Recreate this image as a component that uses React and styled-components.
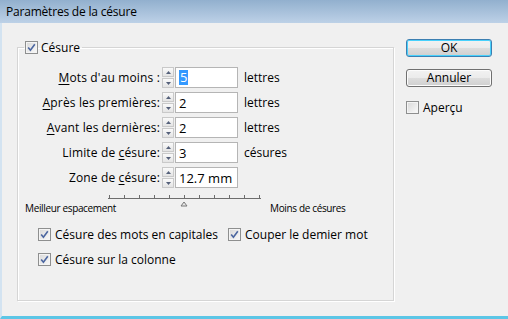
import React from 'react';
import styled, { createGlobalStyle } from 'styled-components';

const GlobalStyle = createGlobalStyle`
  html, body { margin: 0; padding: 0; background: #f0f0f0; }
  body { font-family: "Open Sans", "Noto Sans", sans-serif; font-size: 12px; }
`;

const Window = styled.div`
  width: 508px;
  height: 319px;
  box-sizing: border-box;
  display: flex;
  flex-direction: column;
  background: #f0f0f0;
  border-left: 2px solid #d3e3f1;
  border-bottom: 3px solid #5cc6e6;
  color: #000;
`;

const TitleBar = styled.div`
  height: 23px;
  margin-left: -2px;
  padding-left: 6px;
  display: flex;
  align-items: center;
  background: linear-gradient(#92b0ce, #bdd1e7);
  font-size: 12px;
  letter-spacing: -0.2px;
  flex-shrink: 0;
`;

const Body = styled.div`
  flex: 1;
  display: flex;
  padding: 16px 0 15px 15px;
  gap: 12px;
`;

const Group = styled.fieldset`
  width: 377px;
  box-sizing: border-box;
  margin: 0;
  padding: 12px 0 0 0;
  border: 1px solid #d5d5d5;
  box-shadow: inset 1px 1px 0 #fff, 1px 1px 0 #fff;
`;

const Legend = styled.legend`
  margin-left: 6px;
  padding: 0 2px 0 1px;
  height: 16px;
  display: flex;
  align-items: center;
  gap: 3px;
`;

const Box = styled.span`
  width: 13px;
  height: 13px;
  box-sizing: border-box;
  border: 1px solid #8e8f8f;
  background: linear-gradient(135deg, #d8d8d8, #fafafa);
  box-shadow: inset 0 0 0 1px #f4f4f4;
  display: inline-flex;
  align-items: center;
  justify-content: center;
  flex-shrink: 0;
`;

const Check = ({ checked }) => (
  <Box>
    {checked && (
      <svg width="9" height="9" viewBox="0 0 9 9">
        <path d="M1.2 4.6 L3.4 7.2 L7.8 1.2" fill="none" stroke="#4b66a0" strokeWidth="1.6" />
      </svg>
    )}
  </Box>
);

const Fields = styled.div`
  display: grid;
  grid-template-columns: 144px 12px 64px auto;
  row-gap: 4px;
  align-items: center;
`;

const Label = styled.span`
  text-align: right;
  padding-right: 2px;
  white-space: nowrap;
  letter-spacing: 0.15px;
  u { text-decoration-thickness: 1px; text-underline-offset: 2px; }
`;

const Spinner = styled.div`
  display: flex;
  flex-direction: column;
  height: 21px;
  gap: 1px;
`;

const SpinBtn = styled.div`
  flex: 1;
  box-sizing: border-box;
  border: 1px solid #c9c9c9;
  background: linear-gradient(#fafafa, #e4e4e4);
  display: flex;
  align-items: center;
  justify-content: center;
`;

const Arrow = ({ down }) => (
  <svg width="5" height="3" viewBox="0 0 5 3">
    <path d={down ? 'M0 0 H5 L2.5 3 Z' : 'M0 3 H5 L2.5 0 Z'} fill="#55607a" />
  </svg>
);

const Input = styled.div`
  margin-left: 1px;
  height: 21px;
  box-sizing: border-box;
  border: 1px solid #b5b5b5;
  background: #fff;
  font-size: 13px;
  display: flex;
  align-items: center;
  padding-left: 3px;
`;

const Selected = styled.span`
  background: #3399ff;
  color: #fff;
  line-height: 15px;
  padding: 0 1px;
`;

const Unit = styled.span`
  padding-left: 6px;
`;

const SliderRow = styled.div`
  display: flex;
  align-items: flex-start;
  margin-top: 6px;
  padding-left: 7px;
`;

const SmallLabel = styled.span`
  font-size: 10px;
  letter-spacing: -0.35px;
  margin-top: 7px;
  margin-left: ${p => p.$ml || 0}px;
  width: ${p => (p.$w ? `${p.$w}px` : 'auto')};
  white-space: nowrap;
`;

const Options = styled.div`
  display: grid;
  grid-template-columns: 190px auto;
  row-gap: 7px;
  padding: 10px 0 0 20px;
`;

const Option = styled.label`
  display: flex;
  align-items: center;
  gap: 4px;
  height: 18px;
  white-space: nowrap;
`;

const Side = styled.div`
  display: flex;
  flex-direction: column;
  width: 86px;
`;

const Button = styled.button`
  width: 86px;
  height: 18px;
  margin-bottom: ${p => p.$mb || 0}px;
  padding: 0;
  font-family: inherit;
  font-size: 12px;
  color: #000;
  border: 1px solid ${p => (p.$focus ? '#3c7fb1' : '#707070')};
  border-radius: 3px;
  background: linear-gradient(#f2f2f2 0%, #ebebeb 50%, #dddddd 51%, #cfcfcf 100%);
  box-shadow: ${p => (p.$focus ? 'inset 0 0 0 1px #48d1fc' : 'inset 0 0 0 1px #fcfcfc')};
  line-height: 14px;
`;

const Track = () => {
  const ticks = Array.from({ length: 11 }, (_, i) => 1 + i * 15);
  return (
    <svg width="154" height="15" viewBox="0 0 154 15">
      <line x1="0" y1="4.5" x2="153" y2="4.5" stroke="#6d6d6d" />
      {ticks.map(x => (
        <line key={x} x1={x + 0.5} y1="1" x2={x + 0.5} y2="5" stroke="#6d6d6d" />
      ))}
      <path d="M76 8 L79 12 H73 Z" fill="#e8e8e8" stroke="#777" />
    </svg>
  );
};

const rows = [
  { label: <><u>M</u>ots d'au moins :</>, value: '5', unit: 'lettres', sel: true },
  { label: <><u>A</u>près les premières:</>, value: '2', unit: 'lettres' },
  { label: <><u>A</u>vant les dernières:</>, value: '2', unit: 'lettres' },
  { label: <>Limite de <u>c</u>ésure:</>, value: '3', unit: 'césures' },
  { label: <>Zone de <u>c</u>ésure:</>, value: '12.7 mm', unit: '' },
];

export default function App() {
  return (
    <Window>
      <GlobalStyle />
      <TitleBar>Paramètres de la césure</TitleBar>
      <Body>
        <Group>
          <Legend><Check checked />Césure</Legend>
          <Fields>
            {rows.map((r, i) => (
              <React.Fragment key={i}>
                <Label>{r.label}</Label>
                <Spinner>
                  <SpinBtn><Arrow /></SpinBtn>
                  <SpinBtn><Arrow down /></SpinBtn>
                </Spinner>
                <Input>{r.sel ? <Selected>{r.value}</Selected> : r.value}</Input>
                <Unit>{r.unit}</Unit>
              </React.Fragment>
            ))}
          </Fields>
          <SliderRow>
            <SmallLabel $w={83}>Meilleur espacement</SmallLabel>
            <Track />
            <SmallLabel $ml={8}>Moins de césures</SmallLabel>
          </SliderRow>
          <Options>
            <Option><Check checked />Césure des mots en capitales</Option>
            <Option><Check checked />Couper le demier mot</Option>
            <Option><Check checked />Césure sur la colonne</Option>
          </Options>
        </Group>
        <Side>
          <Button $focus $mb={12}>OK</Button>
          <Button $mb={11}>Annuler</Button>
          <Option><Check />Aperçu</Option>
        </Side>
      </Body>
    </Window>
  );
}
